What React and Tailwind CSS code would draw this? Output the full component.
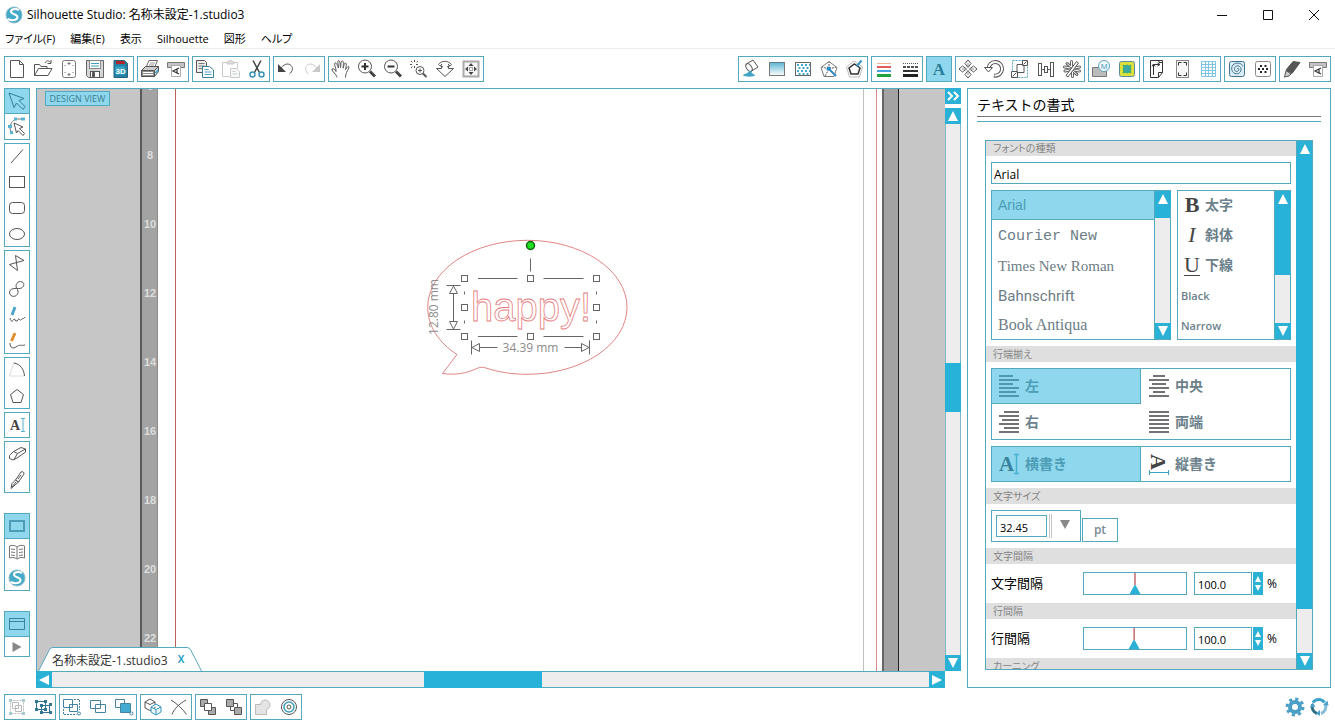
import React, { useState } from "react";

const icons = {
  newFile: <path d="M4.5 2.5h9l4 4v13h-13zM13.5 2.5v4h4" />,
  open: (
    <>
      <path d="M2.5 17.5v-11h5l1.5 2h6v2.5M2.5 17.5l4-7h13.5l-4 7z" />
      <path d="M13 5c1.5-3 4-2.5 5.5-.5M19 2v3.5h-3.5" />
    </>
  ),
  card: (
    <>
      <rect x="4.5" y="2.5" width="13" height="17" rx="2" stroke="#777" />
      <path d="M9.5 5.5h3M11 4v3M9.5 16.5h3M11 15v3" stroke="#777" />
      <path d="M7 7v1M15 7v1M7 14v1M15 14v1" stroke="#777" />
    </>
  ),
  save: (
    <>
      <path d="M2.5 2.5h17v17h-15l-2-2z" fill="#d3d7d9" stroke="#666" />
      <rect x="5.500" y="2.500" width="11" height="8" fill="#fff" stroke="#888" />
      <path d="M7 5.500h8M7 8h8" stroke="#3d9fc0" />
      <rect x="6.500" y="13.500" width="9" height="6" fill="#fff" />
      <path d="M8.500 14.500h2v4h-2z" fill="#555" />
    </>
  ),
  sd: (
    <>
      <path d="M4 2.500h10.500l3 3v14H4z" fill="#2382a6" stroke="#27617a" />
      <path d="M6 3h8l1.500 3H6z" fill="#b3252c" stroke="none" />
      <rect x="5.500" y="8.500" width="9" height="8" fill="#35a5cc" stroke="none" />
      <text x="5.500" y="16" fontSize="8" fontWeight="700" fill="#fff" stroke="none" fontFamily="Liberation Sans, sans-serif">3D</text>
    </>
  ),
  print: (
    <>
      <path d="M7 9.500l3-7h8.500l-3 7z" fill="#fff" stroke="#666" />
      <path d="M11 5h5M10 7h5" stroke="#999" />
      <path d="M2.500 12.500l4-4h13l-4 4z" fill="#ccc" stroke="#555" />
      <path d="M2.500 12.500h13v6h-13z" fill="#8b8b8b" />
      <path d="M15.500 12.500l4-4v5l-4 5z" fill="#ddd" />
      <path d="M4 14.500h10M4 16.500h10" stroke="#fff" />
      <path d="M16.500 15l2.500-3" stroke="#39a8cc" strokeWidth="1.500" />
    </>
  ),
  cutter: (
    <>
      <path d="M2.500 4.500h17v5h-4v-2h-9v2h-4z" fill="#c4c4c4" stroke="#777" />
      <path d="M6.500 7.500h9v11h-9z" fill="#fff" stroke="#aaa" />
      <path d="M14 10l-6 3 6 3M12 11v4" stroke="#333" strokeWidth="1.200" />
    </>
  ),
  copy: (
    <>
      <path d="M2.500 2.500h8l2 2v10h-10z" fill="#eee" />
      <path d="M4.500 5.500h6M4.500 8h6M4.500 10.500h6" stroke="#777" />
      <path d="M8.500 8.500h7l4 3.500v7.500h-11z" fill="#fff" stroke="#3b81a0" />
      <path d="M10.500 11.500h4M10.500 14h7M10.500 16.500h7" stroke="#55a5c5" />
    </>
  ),
  paste: (
    <g stroke="#c9c9c9">
      <path d="M7 4.500H2.500v14h8M14 4.500h3.500v6" />
      <path d="M7 6V4l2-.500c0-2 3-2 3 0l2 .500v2z" fill="#ddd" />
      <path d="M10.500 10.500h6l3 3v6h-9zM12.500 13.500h3M12.500 16h5" fill="#f5f9fa" />
    </g>
  ),
  scissors: (
    <>
      <path d="M7 2.500l6.500 12M15 2.500L8.500 14.500" strokeWidth="1.500" stroke="#444" />
      <circle cx="6.500" cy="16.500" r="2.500" stroke="#3a93b5" strokeWidth="1.500" />
      <circle cx="15.500" cy="16.500" r="2.500" stroke="#3a93b5" strokeWidth="1.500" />
    </>
  ),
  undo: (
    <>
      <path d="M5 12c3-6 8-7.500 11-4.500 2.500 2.500 1.500 6-1.500 8.500" />
      <path d="M3 6v8h8z" fill="#444" stroke="none" />
    </>
  ),
  redo: (
    <g stroke="#c8c8c8">
      <path d="M17 12c-3-6-8-7.500-11-4.500-2.500 2.500-1.500 6 1.500 8.500" />
      <path d="M19 6v8h-8z" fill="#c8c8c8" stroke="none" />
    </g>
  ),
  hand: (
    <path d="M7 19.500c0-3-5.500-6-5-8.500 1.500-1 3 .5 4 2.500C6.500 10 3.500 6 5 5s2.500 3 3.500 5C8.500 6 7 3.500 8.500 2.500c1.800 0 1.500 4 2 7 .5-3 .2-6.500 1.800-6.500 1.900 0 .7 4 .9 7.200C14 7.500 14 5 15.500 5c1.500.5.500 4 0 6.500C17 10 17 8.500 18.700 8.500c1.200 1.300-1.700 4-2.200 6-.5 2-1 2.500-1 5" />
  ),
  zoomIn: (
    <>
      <circle cx="9" cy="8.500" r="6.500" />
      <path d="M9 5v7M5.500 8.500h7" stroke="#333" strokeWidth="2" />
      <path d="M14 13.500l5 5" stroke="#444" strokeWidth="3" />
    </>
  ),
  zoomOut: (
    <>
      <circle cx="9" cy="8.500" r="6.500" />
      <path d="M5.500 8.500h7" stroke="#333" strokeWidth="2" />
      <path d="M14 13.500l5 5" stroke="#444" strokeWidth="3" />
    </>
  ),
  zoomArea: (
    <>
      <path d="M6.500 2v3M2 6.500h3M6.500 8v2M8 6.500h2M3 3l2 2M10 3L8.500 4.500M3 10l1.500-1.500" strokeDasharray="2 1" />
      <circle cx="12" cy="12.500" r="4" />
      <path d="M12 10.500v4M10 12.500h4" />
      <path d="M15 15.500l3.500 3.500" strokeWidth="2" />
    </>
  ),
  zoomDrag: (
    <path d="M2.500 10.500h5V8C5.500 8 5 7 4.500 6.500c3-4 9-4.500 13 0L16 8h-1.500v2.500h5L11 18.500zM8 6L6.500 7.500 9 9M14 6l1.500 1.500L13 9" />
  ),
  fit: (
    <>
      <rect x="3.500" y="3.500" width="15" height="15" stroke="#aaa" strokeWidth="2" fill="#f7f7f7" />
      <path d="M11 5l2.500 3h-5zM11 17l2.500-3h-5zM5 11l3-2.500v5zM17 11l-3-2.500v5z" fill="#444" stroke="none" />
      <rect x="9.500" y="9.500" width="3" height="3" strokeDasharray="1 1" />
    </>
  ),
  paint: (
    <>
      <path d="M6.500 6l6.500-4 5 7-6.500 4z" fill="#fff" />
      <ellipse cx="9" cy="9.500" rx="2.500" ry="4.300" transform="rotate(-35 9 9.500)" fill="#fff" />
      <path d="M9 13c-1 3-6 3-6 4.500 3 1.500 10.500 1.500 12 0-.5-1.500-3-1-4-4.500z" fill="#3fa3c4" stroke="none" />
    </>
  ),
  gradient: (
    <>
      <rect x="3.500" y="4.500" width="15" height="13" fill="url(#fillFade)" stroke="#777" />
      <path d="M3.500 4.500h15" stroke="#5b7b88" />
    </>
  ),
  pattern: (
    <>
      <rect x="3.500" y="4.500" width="15" height="13" stroke="#666" />
      <path d="M5 7h13M6.500 10h12M5 13h13M6.500 16h12" stroke="#45a6d0" strokeWidth="2" strokeDasharray="2 2" />
    </>
  ),
  pentagonCut: (
    <>
      <path d="M11 3.500l8 6-3 9H6l-3-9z" stroke="#777" />
      <path d="M11 11V4M11 11l7-2M11 11l-4 7M11 11L4 9" strokeDasharray="2 1" />
      <path d="M12 12l6 6" stroke="#2e8ac4" strokeWidth="2" />
      <path d="M9 8.500l4 .500-.500 4-4-1z" fill="#2e8ac4" stroke="none" />
    </>
  ),
  pentagonPen: (
    <>
      <path d="M10 3l8.500 6-3 10H5.500L2.500 9z" stroke="#bbb" />
      <path d="M10.500 6l5.500 4-2 6H7l-2-6z" stroke="#333" strokeWidth="1.500" />
      <path d="M13 8l4.500-5.500" stroke="#3a96c4" strokeWidth="2" />
    </>
  ),
  lineColor: (
    <>
      <path d="M4 5.500h14" stroke="#f0b493" />
      <path d="M4 9h14" stroke="#e35b5b" strokeWidth="2" />
      <path d="M4 13h14" stroke="#4aa0e0" strokeWidth="2" />
      <path d="M4 17.500h14" stroke="#1fa340" strokeWidth="3" />
    </>
  ),
  lineStyle: (
    <>
      <path d="M4 5.500h15" strokeDasharray="1 1" />
      <path d="M4 9h15" strokeDasharray="3 1" strokeWidth="2" />
      <path d="M4 13h15" strokeWidth="2" stroke="#333" />
      <path d="M4 17.500h15" strokeWidth="3" stroke="#222" />
    </>
  ),
  textA: (
    <text x="11" y="17" textAnchor="middle" fontSize="17" fontWeight="700" fill="#2b7c97" stroke="none" fontFamily="Liberation Serif, serif">A</text>
  ),
  move: (
    <>
      <path d="M11 2l3 3.500-3 4-3-4zM11 12.500l3 4-3 3.500-3-3.500zM2 11l3.500-3 4 3-4 3zM12.500 11l4-3 3.500 3-3.500 3z" fill="#fff" />
      <path d="M11 5v3M11 14v3M5 11h3M14 11h3" stroke="#888" />
    </>
  ),
  rotate: (
    <>
      <path d="M5.500 11A6.800 6.800 0 1 1 11 17.500" stroke="#555" strokeWidth="4" />
      <path d="M5.500 11A6.800 6.800 0 1 1 11.500 17.500" stroke="#fff" strokeWidth="2" />
      <path d="M1.500 9.500h8L5.500 14z" fill="#fff" />
    </>
  ),
  scale: (
    <>
      <rect x="3.500" y="2.500" width="15" height="17" stroke="#5aa8c0" strokeDasharray="2 1" />
      <path d="M8 6.500h7v8H8z" fill="#fff" />
      <path d="M2.500 13.500h6v6h-6zM13.500 2.500h5v5h-5z" fill="#fff" />
      <path d="M3.500 18.500l4-4M14.500 6.500l3-3" />
    </>
  ),
  align: (
    <>
      <rect x="3.500" y="5.500" width="3" height="12" />
      <rect x="9.500" y="8.500" width="3" height="6" />
      <rect x="15.500" y="4.500" width="3" height="14" />
      <path d="M6.500 11.500h3M12.500 11.500h3" />
    </>
  ),
  replicate: (
    <>
      <path
        d="M4 13l5-1M3.500 9l5.500 1M6 5.500l4 3.500M10.500 3.500v5M11.500 18.500v-5M16 16.500l-4-3.500M18.500 13l-5.500-1M18.500 9l-5 1"
        strokeWidth="3"
        strokeLinecap="round"
        stroke="#666"
      />
      <path
        d="M4 13l5-1M3.500 9l5.500 1M6 5.500l4 3.500M10.500 3.500v5M11.500 18.500v-5M16 16.500l-4-3.500M18.500 13l-5.500-1M18.500 9l-5 1"
        strokeLinecap="round"
        stroke="#fff"
      />
      <path d="M5 17.500L15.500 3.500l2 1.500L7 19z" fill="#fff" />
    </>
  ),
  modify: (
    <>
      <path d="M2.500 9.500h14v9h-14z" fill="#bbb" stroke="#777" />
      <circle cx="14" cy="8" r="5.500" fill="#f2fbfe" stroke="#5aa0bb" />
      <text x="14" y="11" textAnchor="middle" fontSize="8" fill="#3d9cc0" stroke="none" fontFamily="Liberation Sans, sans-serif">M</text>
    </>
  ),
  offset: (
    <>
      <rect x="3.500" y="3.500" width="15" height="15" rx="2" fill="#dce23a" stroke="#5a8aa0" />
      <path d="M7 7l2 1 2-1 2 1 2-1-1 2 1 2-1 2 1 2-2-1-2 1-2-1-2 1 1-2-1-2 1-2z" fill="#3ba9a3" stroke="#35a57a" />
    </>
  ),
  pageA: (
    <>
      <path d="M5.500 2.500h12v12l-4 5h-8z" stroke="#333" />
      <path d="M8.500 17V6.500h6M7 8.500l1.500-2.500L10 8.500M12.500 5l2.500 1.500L12.500 8M13.500 19v-4.500h4M14 2.500v2h3" stroke="#333" />
    </>
  ),
  marks: (
    <>
      <rect x="5.500" y="2.500" width="12" height="17" stroke="#888" fill="#f7f7f7" />
      <path d="M7.500 7.500v-3h3M12.500 4.500h3v3M7.500 14.500v3h3M12.500 17.500h3v-3" stroke="#333" />
    </>
  ),
  grid: (
    <path d="M4.500 3.500h14v15h-14zM8.500 3.500v15M11.500 3.500v15M15.500 3.500v15M4.500 6.500h14M4.500 9.500h14M4.500 12.500h14M4.500 15.500h14" stroke="#7fc4e2" />
  ),
  spiral: (
    <>
      <rect x="3.500" y="3.500" width="15" height="15" rx="2" stroke="#3d7590" fill="#dcecf4" />
      <path d="M11 11c1-1.500 2.500 0 1.500 1.500-1.500 2-4.500.5-4-2C9 7 14 7 15 10.500c.5 4-3 6-6 5-4-1.500-4.500-7-1-9.500 4-2 8-.5 9 2.500" stroke="#3d7590" />
    </>
  ),
  dots: (
    <>
      <rect x="3.500" y="3.500" width="15" height="15" rx="2" stroke="#888" />
      <path d="M8 8h2M12.500 8h2M6 11h2M10 11h2M14 11h2M8 14h2M12.500 14h2" stroke="#222" strokeWidth="2" />
    </>
  ),
  marker: (
    <>
      <path d="M5 12l7-8.500 7 1-8 11z" fill="#555" />
      <path d="M5 12.500l5 3.500-2 2-4.500 1z" fill="#ccc" />
    </>
  ),
  arrow: <path d="M3 3l15 5.500-5 2 6 6-2 3-6.500-6.500-2.500 4.500z" stroke="#2f7e98" />,
  editPts: (
    <>
      <path d="M4 13c0-5 2-9 7-10h7M4 13l2 5" stroke="#777" />
      <path d="M2 9h4v3H2zM8 1.500h3v3H8zM15 1.500h4v3h-4zM4 15h3v3H4z" fill="#57b5d4" stroke="none" />
      <path d="M8 7l9 4-3.500 1.500 5 5-1.500 2-5-5-1.500 2.500z" fill="#fff" />
    </>
  ),
  line: <path d="M5 18L17 4.500" />,
  rect: <rect x="3.500" y="5.500" width="15" height="11" />,
  rrect: <rect x="3.500" y="5.500" width="15" height="11" rx="3" />,
  ellipse: <ellipse cx="11" cy="11" rx="7.500" ry="5.500" />,
  poly: <path d="M9.500 3.500L18 8.500 3.500 12.500l8 6z" />,
  curve: <path d="M11.500 11.500c-3-3-1-8 3-8 4.500.5 4 5 1 6.500-3 1.500-11-1.500-12 4 0 6 8 5.500 8.500.5 0-1 0-2-.5-3z" />,
  freehand: (
    <>
      <path d="M6 11l3-8" stroke="#4aa5c8" strokeWidth="3" />
      <path d="M4 14c1 5 3 3 4 1 1-1 1 3 3 2s1-3 2-2 1 2 3 0c0-1 1 1 3-2" />
    </>
  ),
  smooth: (
    <>
      <path d="M5.500 11l3.500-8" stroke="#e2902e" strokeWidth="3" />
      <path d="M4 13c0 5 3 6 6 4 4-3 5-1 9-2" />
    </>
  ),
  arc: (
    <>
      <path d="M8 3L3.500 17h15" stroke="#ddd" />
      <path d="M8 4c6 1 10 6 10.500 13" />
    </>
  ),
  pentagon: <path d="M11 4.500l6.500 5-2.500 8H7l-2.500-8z" />,
  textTool: (
    <>
      <text x="9" y="16" textAnchor="middle" fontSize="14" fontWeight="700" fill="#444" stroke="none" fontFamily="Liberation Serif, serif">A</text>
      <path d="M15 4.500h4M15 17.500h4M17 4.500v13" stroke="#5ab0d0" />
    </>
  ),
  eraser: <path d="M3.500 12.500l4-4 7.500-4 4.500 1.500v3L11 15l-4 2-3.500-1.500zM7.500 8.500l4 2 8-4.500M11.500 10.500L8 16.500" />,
  knife: (
    <>
      <path d="M9.500 11l5.500-8c1.500-1 3.500.5 3 2l-5.500 8zM5 19.500l1-5 3.500-3.500 3 2z" />
      <path d="M12 10l3-4M6 18l4-5" />
    </>
  ),
  viewSingle: <rect x="4" y="6" width="14" height="10" stroke="#4d9db6" strokeWidth="2" fill="#8ed7ec" />,
  book: (
    <path d="M11 6C9 4 5 4 3.500 5v12c2-.8 5-.8 7.500 1 2.500-1.800 5.500-1.800 7.500-1V5c-1.500-1-5.500-1-7.500 1zM11 6v12M5 8l4 .5M5 11l4 .5M5 14l4 .5M13 8.500l4-.5M13 11.500l4-.5M13 14.500l4-.5" stroke="#777" />
  ),
  sphere: <Logo />,
  panel: <path d="M3.500 5.500h15v11h-15zM3.500 8.500h15" stroke="#37839c" />,
  play: <path d="M6.500 6l9 5-9 5z" fill="#888" stroke="none" />,
  group: (
    <g stroke="#bbb">
      <path d="M4.500 4.500h13v13h-13z" strokeDasharray="2 1" />
      <path d="M6.500 6.500h6v6h-6zM9.500 9.500h6v6h-6z" />
      <path d="M3 3h3v3H3zM16 3h3v3h-3zM3 16h3v3H3zM16 16h3v3h-3z" fill="#a9ccd0" stroke="none" />
    </g>
  ),
  ungroup: (
    <g stroke="#37748c">
      <path d="M4.500 5.500h9v8h-9zM9.500 9.500h8v7h-8z" />
      <path d="M3 4h3v3H3zM12 4h3v3h-3zM3 12h3v3H3zM12 12h3v3h-3zM17 7h3v3h-3zM8 8h3v3H8zM8 15h3v3H8zM17 15h3v3h-3z" fill="#2f7690" stroke="none" />
    </g>
  ),
  selAll: (
    <g stroke="#4584a0">
      <path d="M2.500 3.500h9v8h-9zM8.500 8.500h8v7h-8z" fill="#fff" />
      <path d="M2.500 13v5.500h13M13 3.500h5.500V14" strokeDasharray="2 1" />
      <circle cx="18" cy="17.500" r="1.500" />
    </g>
  ),
  selNone: <path d="M3.500 4.500h10v8h-10zM8.500 8.500h10v8h-10z" fill="#fff" stroke="#4584a0" />,
  selColor: (
    <g stroke="#4584a0">
      <path d="M2.500 3.500h9v8h-9z" fill="#fff" />
      <path d="M7.500 7.500h10v9h-10z" fill="#42abd0" />
      <circle cx="18.500" cy="17.500" r="1.500" fill="#fff" />
    </g>
  ),
  duplicate: (
    <>
      <path d="M3 6l5-3 5 3v6l-5 2.500L3 12zM3 6l5 2.500L13 6" fill="#fff" />
      <path d="M9 11l5-3 5 3v5l-5 3-5-3zM9 11l5 2.500 5-2.500M14 13.500V19" fill="#e8f7fc" stroke="#3c94b5" />
    </>
  ),
  remove: <path d="M3 4c5 3 12 9 15.500 14.500M18 4C11 8 6 13 4 18.500" />,
  front: (
    <>
      <path d="M3.500 3.500h7v7h-7zM11.500 11.500h7v7h-7z" fill="#aaa" />
      <path d="M7.500 7.500h7v7h-7z" fill="#fff" />
    </>
  ),
  back: (
    <>
      <path d="M7.500 7.500h7v7h-7z" fill="#fff" />
      <path d="M3.500 3.500h7v7h-7zM11.500 11.500h7v7h-7z" fill="#aaa" />
    </>
  ),
  weld: <path d="M3.500 8.500h5c.5-6 8.500-6 9.500 0 0 3-1 4-3.500 5v5h-11z" fill="#e4e4e4" stroke="#bbb" />,
  target: (
    <>
      <circle cx="11" cy="11" r="7.500" />
      <circle cx="11" cy="11" r="5" stroke="#3d9cc0" strokeWidth="1.500" />
      <circle cx="11" cy="11" r="2" />
    </>
  ),
};

function Logo() {
  return (
    <>
      <circle cx="11" cy="11" r="8" fill="#45aaca" stroke="#8fbccb" />
      <path d="M16 6c-4-2-8.500-.5-8 2 .5 2.500 6.500 2 6.500 5 0 3.500-5.500 4-10 2" stroke="#fff" strokeWidth="2" />
    </>
  );
}

const Icon = ({ name }) => (
  <svg className="h-[22px] w-[22px] shrink-0" viewBox="0 0 22 22" fill="none" stroke="#555">
    {icons[name]}
  </svg>
);

const ToolGroup = ({ items, active, vertical, label }) => (
  <div
    role="group"
    aria-label={label}
    className={`flex shrink-0 bg-white outline -outline-offset-1 outline-[#55a9be] ${vertical ? "flex-col" : ""}`}
  >
    {items.map((name) => (
      <button
        key={name}
        aria-label={name}
        className={`flex w-[26px] items-center justify-center ${name === "play" ? "h-5" : "h-[26px]"} ${
          name === active ? "border border-[#55a9be] bg-[#8ed7ec]" : ""
        }`}
      >
        <Icon name={name} />
      </button>
    ))}
  </div>
);

const topLeft = [
  ["newFile", "open", "card", "save", "sd"],
  ["print", "cutter"],
  ["copy", "paste", "scissors"],
  ["undo", "redo"],
  ["hand", "zoomIn", "zoomOut", "zoomArea", "zoomDrag", "fit"],
];

const topRight = [
  ["paint", "gradient", "pattern", "pentagonCut", "pentagonPen"],
  ["lineColor", "lineStyle"],
  ["textA"],
  ["move", "rotate", "scale", "align", "replicate"],
  ["modify", "offset"],
  ["pageA", "marks", "grid"],
  ["spiral", "dots"],
  ["marker", "cutter"],
];

const sideTools = [
  ["arrow", "editPts"],
  ["line", "rect", "rrect", "ellipse"],
  ["poly", "curve", "freehand", "smooth"],
  ["arc", "pentagon"],
  ["textTool"],
  ["eraser", "knife"],
];

const bottomTools = [
  ["group", "ungroup"],
  ["selAll", "selNone", "selColor"],
  ["duplicate", "remove"],
  ["front", "back"],
  ["weld", "target"],
];

const menus = ["ファイル(F)", "編集(E)", "表示", "Silhouette", "図形", "ヘルプ"];
const ruler = [6, 8, 10, 12, 14, 16, 18, 20, 22];

const turns = {
  up: "",
  down: "rotate-180",
  left: "-rotate-90",
  right: "rotate-90",
};

const ScrollButton = ({ dir }) => (
  <button aria-label={`scroll ${dir}`} className="flex h-4 w-4 shrink-0 items-center justify-center bg-[#2bb1d5]">
    <svg className={`h-3 w-3 ${turns[dir]}`} viewBox="0 0 12 12" fill="#fff">
      <path d="M6 1l5 10H1z" />
    </svg>
  </button>
);

const TitleBar = () => (
  <header className="shrink-0 border-b border-[#ececec]">
    <div className="flex h-[29px] items-center justify-between">
      <div className="flex items-center gap-[2px] pl-[3px]">
        <svg className="h-[22px] w-[22px]" viewBox="0 0 22 22" fill="none">
          <Logo />
        </svg>
        <h1 className="pt-px text-[12px] leading-4">Silhouette Studio: 名称未設定-1.studio3</h1>
      </div>
      <div className="flex">
        {["M1 6.500h10", "M1.500 1.500h9v9h-9z", "M1 1l10 10M11 1L1 11"].map((d, i) => (
          <button key={d} aria-label={["minimize", "maximize", "close"][i]} className="flex h-7 w-[46px] items-center justify-center pl-1">
            <svg className="h-3 w-3" viewBox="0 0 12 12" fill="none" stroke="#111">
              <path d={d} />
            </svg>
          </button>
        ))}
      </div>
    </div>
    <nav className="flex h-[19px] items-center gap-[15px] pt-px pl-[5px] text-[11px] leading-4 [font-feature-settings:'palt']">
      {menus.map((menu) => (
        <button key={menu} className="whitespace-nowrap">
          {menu}
        </button>
      ))}
    </nav>
  </header>
);

const Bubble = () => (
  <svg className="absolute top-[141px] left-[262px] h-[155px] w-[220px]" viewBox="0 0 220 155" fill="none" stroke="#666">
    <path
      d="M37 124.500L22.500 143.500C40 146 51 141 58 138c2-.8 5-1 8 0 12 4 26 6.300 41 6.300A99.700 67 0 0 0 207 77.300 99.700 67 0 0 0 107.300 10.300 99.700 67 0 0 0 7.700 77.300C7.700 96 19 113 37 124.500z"
      stroke="#e08585"
    />
    <text x="51" y="91" fontSize="40" stroke="#e57c7c" strokeWidth="0.800" fontFamily="Liberation Sans, Arial, sans-serif">happy!</text>
    <path d="M58 48.500h39.500M123.500 48.500h40M58 106.500h39.500M123.500 106.500h40M110.500 28.500v13M44.500 61.500v3M44.500 90.500v3M176.500 61.500v3M176.500 90.500v3" />
    {[44, 110, 176].map((x) =>
      [48, 77, 106].map((y) =>
        x === 110 && y === 77 ? null : <rect key={`${x}-${y}`} x={x - 2.5} y={y - 2.5} width="6" height="6" fill="#fff" />
      )
    )}
    <circle cx="110.500" cy="15.500" r="4" fill="#1fe01f" stroke="#14601a" strokeWidth="1.500" />
    <path d="M26.500 55.500h14M26.500 99.500h14M33.500 63.500v28M33.500 56l-4 7.500h8zM33.500 99l-4-7.500h8z" />
    <path d="M51.500 110.500v14M169.500 110.500v14M59.500 117.500h18M144.500 117.500h17M52 117.500l7.500-4v8zM169 117.500l-7.500-4v8z" />
    <g fill="#8c8c8c" stroke="none" fontSize="12" textAnchor="middle" fontFamily="Open Sans, sans-serif">
      <text x="110.500" y="122">34.39 mm</text>
      <text transform="translate(18 77) rotate(-90)">12.80 mm</text>
    </g>
  </svg>
);

const Workspace = () => (
  <main className="flex min-w-0 flex-1 flex-col">
    <div className="flex min-h-0 flex-1">
      <section className="relative flex min-w-0 flex-1 overflow-hidden border-t border-l border-[#55a9be] bg-[#c6c6c6]">
        <div className="w-[103px] shrink-0 pt-[2px] pl-2">
          <span className="block w-[65px] border border-[#55a9be] bg-[#8ed7ec] text-center text-[9px] leading-[13px] text-[#3c7f94]">DESIGN VIEW</span>
        </div>
        <div className="w-[18px] shrink-0 border-r border-l-2 border-r-[#8c8c8c] border-l-[#5a5a5a] bg-[#a3a3a3]">
          <div className="mt-[-37px] flex flex-col">
            {ruler.map((n) => (
              <span
                key={n}
                className="flex h-[69px] shrink-0 items-center justify-center pl-px font-['Liberation_Sans',sans-serif] text-[11px] font-bold text-[#dedede]"
              >
                {n}
              </span>
            ))}
          </div>
        </div>
        <div className="relative flex min-w-0 flex-1 bg-white pr-[5px] pl-[17px]">
          <div className="w-px bg-[#c0605a]" />
          <div className="mr-3 flex-1 border-r border-[#c0c0c0]" />
          <div className="w-px bg-[#dc8a8a]" />
          <Bubble />
        </div>
        <div className="w-[17px] shrink-0 border-r border-l-2 border-r-[#222] border-l-[#666] bg-[#a3a3a3]" />
        <div className="w-[46px] shrink-0" />

        <div className="absolute bottom-0 left-px h-6 w-[164px]">
          <svg className="absolute inset-0 h-6 w-[164px]" viewBox="0 0 164 24" fill="#fff" stroke="#55a9be">
            <path d="M.5 24L11 3.500Q12 .5 15 .5h134q3 0 4 3L163.500 24" />
          </svg>
          <div className="relative flex h-6 items-center pt-[3px] pl-[14px]">
            <span className="text-[12px] leading-4 whitespace-nowrap text-[#333]">名称未設定-1.studio3</span>
            <button aria-label="close tab" className="ml-[10px] pb-1 text-[10px] leading-3 font-bold text-[#2ea3c9]">
              X
            </button>
          </div>
        </div>
      </section>

      <div className="flex w-4 shrink-0 flex-col">
        <button aria-label="collapse panel" className="flex h-4 items-center justify-center bg-[#2bb1d5]">
          <svg className="h-3 w-3" viewBox="0 0 12 12" fill="none" stroke="#fff" strokeWidth="2">
            <path d="M1 2l4 4-4 4M7 2l4 4-4 4" />
          </svg>
        </button>
        <div className="mt-1 flex min-h-0 flex-1 flex-col bg-[#ededed]">
          <ScrollButton dir="up" />
          <div className="flex flex-1 flex-col border-x border-[#7fb8c7]">
            <div className="grow-[239]" />
            <div className="-mx-px grow-[49] bg-[#27b3d9]" />
            <div className="grow-[243]" />
          </div>
          <ScrollButton dir="down" />
        </div>
      </div>
    </div>

    <div className="mr-4 flex shrink-0 border-y border-[#55a9be] bg-[#ededed]">
      <div className="-my-px flex h-[17px] items-center bg-[#2bb1d5]">
        <ScrollButton dir="left" />
      </div>
      <div className="-my-px flex flex-1">
        <div className="grow-[372]" />
        <div className="grow-[118] bg-[#27b3d9]" />
        <div className="grow-[387]" />
      </div>
      <div className="-my-px flex h-[17px] items-center bg-[#2bb1d5]">
        <ScrollButton dir="right" />
      </div>
    </div>
  </main>
);

const SectionTitle = ({ children }) => (
  <h3 className="h-4 shrink-0 bg-[#dfdfdf] pl-[7px] text-[10px] leading-4 text-[#858585] [font-feature-settings:'palt']">{children}</h3>
);

const fonts = [
  { name: "Arial", style: "h-[29px] font-['Liberation_Sans',sans-serif] text-[14px]" },
  { name: "Courier New", style: "h-8 font-['Liberation_Mono',monospace] text-[15px]" },
  { name: "Times New Roman", style: "h-7 font-['Liberation_Serif',serif] text-[15px]" },
  { name: "Bahnschrift", style: "h-8 font-['Roboto',sans-serif] text-[15px]" },
  { name: "Book Antiqua", style: "h-[25px] font-['Liberation_Serif',serif] text-[16px]" },
];

const faces = [
  { mark: "B", name: "太字", markStyle: "font-bold" },
  { mark: "I", name: "斜体", markStyle: "font-normal italic" },
  { mark: "U", name: "下線", markStyle: "font-normal underline underline-offset-3 decoration-1" },
  { name: "Black" },
  { name: "Narrow" },
];

const ListScroll = ({ thumb }) => (
  <div className="flex w-4 shrink-0 flex-col border-l border-[#55a9be] bg-[#ededed]">
    <ScrollButton dir="up" />
    <div className={`bg-[#27b3d9] ${thumb}`} />
    <div className="flex-1" />
    <ScrollButton dir="down" />
  </div>
);

const alignRows = {
  left: [14, 20, 14, 20, 17, 20],
  center: [12, 20, 14, 20, 12, 20],
  right: [15, 20, 17, 20, 15, 20],
  justify: [20, 20, 20, 20, 20, 20],
};

const AlignIcon = ({ kind, on }) => (
  <svg className="h-6 w-5 shrink-0" viewBox="0 0 20 24" fill="none" stroke={on ? "#37839c" : "#444"} strokeWidth="1.500">
    {alignRows[kind].map((w, i) => {
      const x = kind === "left" || kind === "justify" ? 0 : kind === "right" ? 20 - w : (20 - w) / 2;
      return <path key={i} d={`M${x} ${2 + i * 4}h${w}`} />;
    })}
  </svg>
);

const DirectionIcon = ({ vertical }) => (
  <svg className="h-6 w-5 shrink-0" viewBox="0 0 20 24" fill="none" stroke={vertical ? "#3ba4c4" : "#4dafd0"}>
    {vertical ? (
      <>
        <text transform="translate(2 2) rotate(90)" fontSize="22" fontWeight="700" fill="#444" stroke="none" fontFamily="Liberation Serif, serif">A</text>
        <path d="M0 20.500h20M.5 18v5M19.500 18v5" />
      </>
    ) : (
      <>
        <text x="0" y="19" fontSize="21" fontWeight="700" fill="#37839c" stroke="none" fontFamily="Liberation Serif, serif">A</text>
        <path d="M15 2.500h5M15 21.500h5M17.500 2.500v19" strokeWidth="1.500" />
      </>
    )}
  </svg>
);

const Choice = ({ icon, label, on, onClick }) => (
  <button
    onClick={onClick}
    aria-pressed={on}
    className={`flex h-9 items-center gap-[6px] text-[14px] font-bold ${
      on ? "border border-[#55a9be] bg-[#8ed7ec] pl-[7px] text-[#4c9db5]" : "pl-2 text-[#6c818b]"
    }`}
  >
    {icon}
    <span className="pb-[2px]">{label}</span>
  </button>
);

const SpacingRow = ({ id, label, range }) => {
  const [value, setValue] = useState(range);
  return (
    <div className="flex h-[39px] shrink-0 items-center pl-[5px]">
      <label htmlFor={id} className="w-[92px] text-[13px]">
        {label}
      </label>
      <input
        id={id}
        type="range"
        value={value}
        onChange={(e) => setValue(e.target.value)}
        className="h-[23px] w-[104px] appearance-none border border-[#55a9be] bg-white [&::-webkit-slider-thumb]:h-[21px] [&::-webkit-slider-thumb]:w-[13px] [&::-webkit-slider-thumb]:appearance-none [&::-webkit-slider-thumb]:bg-[linear-gradient(#a82020_12px,#2bb1d5_12px)] [&::-webkit-slider-thumb]:[clip-path:polygon(6px_0,7px_0,7px_12px,12px_100%,1px_100%,6px_12px)]"
      />
      <input
        aria-label={`${label} %`}
        defaultValue="100.0"
        className="ml-[7px] h-[23px] w-[58px] border border-[#55a9be] pt-[2px] pl-[3px] text-[11px]"
      />
      <div className="ml-px flex h-[23px] w-[10px] flex-col items-center justify-evenly bg-[#2bb1d5]">
        {["up", "down"].map((dir) => (
          <button key={dir} aria-label={`${label} ${dir}`}>
            <svg className={`h-[6px] w-[6px] ${turns[dir]}`} viewBox="0 0 6 6" fill="#fff">
              <path d="M3 0l3 6H0z" />
            </svg>
          </button>
        ))}
      </div>
      <span className="ml-1 text-[12px]">%</span>
    </div>
  );
};

const TextPanel = () => {
  const [font, setFont] = useState("Arial");
  const [align, setAlign] = useState("left");
  const [vertical, setVertical] = useState(false);

  return (
    <aside className="flex w-[364px] shrink-0 flex-col border border-[#55a9be] px-[9px] pb-[17px]">
      <h2 className="h-7 shrink-0 border-b border-[#777] text-[14px] leading-8">テキストの書式</h2>
      <div className="mt-1 h-px shrink-0 bg-[#55a9be]" />

      <div className="mx-2 mt-[18px] flex min-h-0 flex-1 outline -outline-offset-1 outline-[#55a9be]">
        <div className="flex min-w-0 flex-1 flex-col overflow-hidden pl-px">
          <SectionTitle>フォントの種類</SectionTitle>
          <div className="flex shrink-0 flex-col gap-[6px] px-[5px] py-[6px]">
            <input
              aria-label="font name"
              value={font}
              onChange={(e) => setFont(e.target.value)}
              className="h-[22px] border border-[#55a9be] px-[2px] pt-[2px] text-[12px]"
            />
            <div className="flex h-[150px] gap-[6px]">
              <div className="flex w-[180px] border border-[#55a9be]">
                <div className="flex min-w-0 flex-1 flex-col overflow-hidden">
                  {fonts.map(({ name, style }) => (
                    <button
                      key={name}
                      onClick={() => setFont(name)}
                      className={`shrink-0 pl-[6px] text-left leading-none ${style} ${
                        name === font ? "border-b border-[#55a9be] bg-[#8ed7ec] text-[#4c9db5]" : "text-[#6c7d86]"
                      }`}
                    >
                      {name}
                    </button>
                  ))}
                </div>
                <ListScroll thumb="h-[11px]" />
              </div>
              <div className="flex min-w-0 flex-1 border border-[#55a9be]">
                <div className="flex min-w-0 flex-1 flex-col overflow-hidden">
                  {faces.map(({ mark, name, markStyle }) => (
                    <button
                      key={name}
                      className={`flex h-[30px] shrink-0 items-center pl-[3px] text-[#6c818b] ${mark ? "pb-[3px] font-bold" : "font-semibold"}`}
                    >
                      {mark && (
                        <span className={`w-6 pr-[2px] text-center font-['Liberation_Serif',serif] text-[22px] leading-6 text-[#444] ${markStyle}`}>
                          {mark}
                        </span>
                      )}
                      <span className={mark ? "text-[14px]" : "text-[11px]"}>{name}</span>
                    </button>
                  ))}
                </div>
                <ListScroll thumb="h-[68px]" />
              </div>
            </div>
          </div>

          <SectionTitle>行端揃え</SectionTitle>
          <div className="flex shrink-0 flex-col gap-[6px] px-[5px] py-[6px]">
            <div className="grid grid-cols-2 outline -outline-offset-1 outline-[#55a9be]">
              {[
                ["left", "左"],
                ["center", "中央"],
                ["right", "右"],
                ["justify", "両端"],
              ].map(([kind, label]) => (
                <Choice
                  key={kind}
                  label={label}
                  on={align === kind}
                  onClick={() => setAlign(kind)}
                  icon={<AlignIcon kind={kind} on={align === kind} />}
                />
              ))}
            </div>
            <div className="grid grid-cols-2 outline -outline-offset-1 outline-[#55a9be]">
              <Choice label="横書き" on={!vertical} onClick={() => setVertical(false)} icon={<DirectionIcon />} />
              <Choice label="縦書き" on={vertical} onClick={() => setVertical(true)} icon={<DirectionIcon vertical />} />
            </div>
          </div>

          <SectionTitle>文字サイズ</SectionTitle>
          <div className="flex shrink-0 items-end gap-px px-[5px] py-[6px]">
            <div className="flex h-8 w-[90px] items-center border border-[#55a9be] pl-1">
              <input
                aria-label="font size"
                defaultValue="32.45"
                className="h-[22px] w-[51px] border border-[#55a9be] pt-[2px] pl-[3px] text-[11px]"
              />
              <div className="relative ml-[2px] h-6 flex-1 border-l-3 border-double border-[#c4c4c4]">
                <select aria-label="font size presets" className="h-full w-full appearance-none text-transparent">
                  <option>32.45</option>
                </select>
                <svg className="pointer-events-none absolute top-[6px] left-2 h-[10px] w-[10px]" viewBox="0 0 10 10" fill="#888">
                  <path d="M0 0h10L5 9z" />
                </svg>
              </div>
            </div>
            <button className="h-6 w-9 border border-[#55a9be] text-[12px] font-semibold text-[#7b8b94]">pt</button>
          </div>

          <SectionTitle>文字間隔</SectionTitle>
          <SpacingRow id="char-spacing" label="文字間隔" range={50} />
          <SectionTitle>行間隔</SectionTitle>
          <SpacingRow id="line-spacing" label="行間隔" range={49} />
          <SectionTitle>カーニング</SectionTitle>
        </div>

        <div className="flex w-[17px] shrink-0 flex-col border border-[#55a9be] bg-[#ededed]">
          <ScrollButton dir="up" />
          <div className="-mx-px grow-[454] bg-[#27b3d9]" />
          <div className="grow-[44]" />
          <ScrollButton dir="down" />
        </div>
      </div>
    </aside>
  );
};

const App = () => {
  return (
    <div className="flex h-screen flex-col bg-white font-['Open_Sans','Noto_Sans_CJK_JP',sans-serif] text-black">
      <svg className="absolute h-0 w-0" aria-hidden="true">
        <defs>
          <linearGradient id="fillFade" x1="0" y1="0" x2="0" y2="1">
            <stop offset="0" stopColor="#5cb6d2" />
            <stop offset="1" stopColor="#fff" />
          </linearGradient>
        </defs>
      </svg>

      <TitleBar />

      <div className="mt-[7px] flex shrink-0 justify-between px-1">
        <div className="flex gap-[3px]">
          {topLeft.map((items) => (
            <ToolGroup key={items[0]} items={items} label={items[0]} />
          ))}
        </div>
        <div className="flex gap-[3px]">
          {topRight.map((items) => (
            <ToolGroup key={items[0]} items={items} label={items[0]} active="textA" />
          ))}
        </div>
      </div>

      <div className="flex min-h-0 flex-1 gap-[6px] px-1 py-[6px]">
        <div className="flex shrink-0 flex-col gap-5">
          <div className="flex flex-col gap-[3px]">
            {sideTools.map((items) => (
              <ToolGroup key={items[0]} vertical items={items} label={items[0]} active="arrow" />
            ))}
          </div>
          <ToolGroup vertical label="views" items={["viewSingle", "book", "sphere"]} active="viewSingle" />
          <ToolGroup vertical label="panels" items={["panel", "play"]} active="panel" />
        </div>
        <Workspace />
        <TextPanel />
      </div>

      <footer className="mb-[5px] flex shrink-0 items-center justify-between px-1">
        <div className="flex gap-[3px]">
          {bottomTools.map((items) => (
            <ToolGroup key={items[0]} items={items} label={items[0]} />
          ))}
        </div>
        <div className="flex items-center gap-1 pr-[2px]">
          <button aria-label="preferences">
            <svg className="h-5 w-5" viewBox="0 0 20 20" fill="none" stroke="#4a9fc7">
              <circle cx="10" cy="10" r="5" strokeWidth="4" />
              <circle cx="10" cy="10" r="8" strokeWidth="3" strokeDasharray="3.100 3.180" />
            </svg>
          </button>
          <button aria-label="sync">
            <svg className="h-5 w-5" viewBox="0 0 20 20" fill="none" strokeWidth="3">
              <path d="M4 5.500A7 7 0 0 1 15.500 5.500" stroke="#3aa3cc" />
              <path d="M16.500 7.500A7 7 0 0 1 12 16.500" stroke="#84bcdb" />
              <path d="M8 16.500A7 7 0 0 1 3.500 7.500" stroke="#2f6d85" />
              <path d="M14 8l5.500.5-1-5zM11 13v6l-4-2.500zM1 10.500l2.500-5 3 4z" fill="#4a9fc7" stroke="none" />
            </svg>
          </button>
        </div>
      </footer>
    </div>
  );
};

export default App;
